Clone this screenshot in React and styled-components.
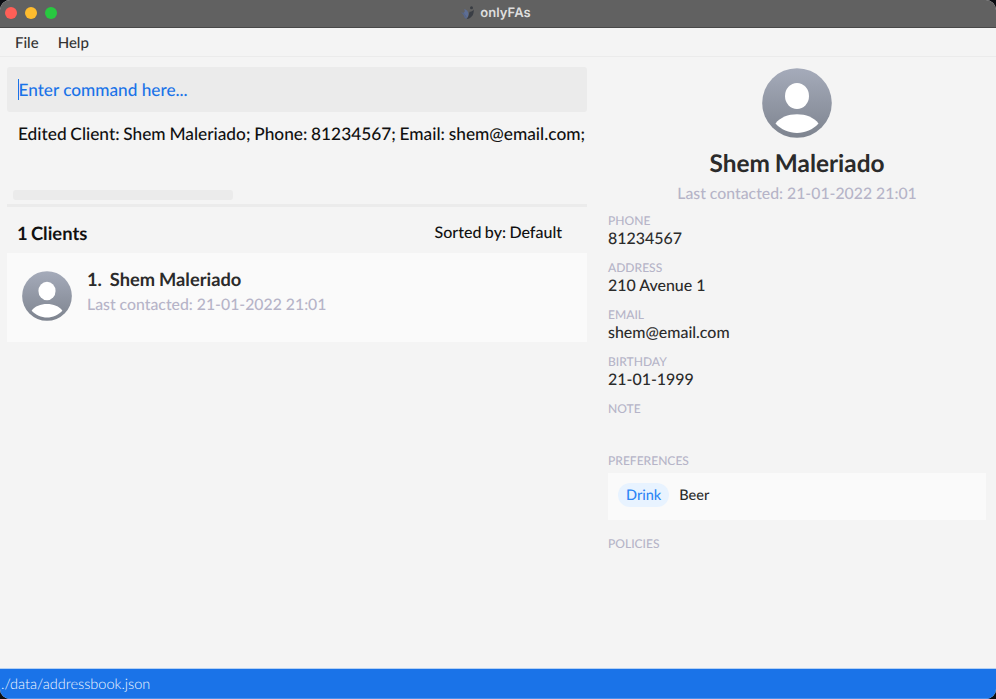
import React from "react";
import styled, { createGlobalStyle } from "styled-components";

const GlobalStyle = createGlobalStyle`
  * { box-sizing: border-box; }
  html, body { margin: 0; background: #0b0d12; overflow: hidden; }
  body { font-family: Lato, "Open Sans", sans-serif; font-size: 17px; color: #2b2b2b; text-rendering: geometricPrecision; }
`;

const Window = styled.div`
  width: 996px;
  height: 699px;
  display: flex;
  flex-direction: column;
  background: #f4f4f4;
  border-radius: 10px;
  overflow: hidden;
`;

const TitleBar = styled.header`
  height: 28px;
  flex: none;
  display: grid;
  grid-template-columns: 1fr auto 1fr;
  align-items: start;
  background: #616161;
  border-bottom: 1px solid #484848;
`;

const Lights = styled.div`
  display: flex;
  gap: 8px;
  padding: 7px 0 0 5px;
`;

const Light = styled.span`
  width: 12px;
  height: 12px;
  border-radius: 50%;
  background: ${(p) => p.$color};
`;

const Title = styled.div`
  display: flex;
  align-items: center;
  gap: 6px;
  margin-left: -4px;
  font: 600 13px/26px Inter, sans-serif;
  letter-spacing: 0.1px;
  color: #dedede;
`;

const MenuBar = styled.nav`
  height: 29px;
  flex: none;
  display: flex;
  gap: 19px;
  padding-left: 15px;
  border-bottom: 1px solid #ebebeb;
  font-size: 15px;
  line-height: 30px;
  font-weight: 500;
  color: #333;
`;

const Main = styled.main`
  flex: 1;
  display: flex;
  gap: 21px;
  padding: 0 10px 0 7px;
`;

const LeftPane = styled.section`
  width: 580px;
  flex: none;
  padding-top: 10px;
`;

const CommandBox = styled.div`
  height: 45px;
  display: flex;
  align-items: center;
  padding-left: 11px;
  border-radius: 3px;
  background: #ebebeb;
`;

const Prompt = styled.span`
  height: 21px;
  border-left: 1px solid #1a73e8;
  font-size: 17.2px;
  line-height: 21px;
  font-weight: 500;
  text-indent: -0.5px;
  color: #1a73e8;
`;

const ResultBox = styled.div`
  height: 95px;
  display: flex;
  flex-direction: column;
  justify-content: space-between;
  padding: 11px 0 7px;
  border-bottom: 3px solid #ebebeb;
  overflow: hidden;
`;

const ResultText = styled.div`
  padding-left: 11px;
  font-size: 17.3px;
  word-spacing: -0.6px;
  line-height: 21px;
  font-weight: 500;
  color: #111;
  white-space: nowrap;
`;

const ScrollThumb = styled.div`
  width: 220px;
  height: 10px;
  margin-left: 6px;
  margin-bottom: -3px;
  border-radius: 3px;
  background: #ebebeb;
`;

const ListHeader = styled.div`
  height: 46px;
  display: flex;
  justify-content: space-between;
  padding: 0 25px 0 10px;
  color: #111;
`;

const Count = styled.h2`
  margin: 0;
  font-size: 18.4px;
  word-spacing: -1.2px;
  line-height: 53px;
  font-weight: 700;
`;

const SortLabel = styled.span`
  font-size: 16px;
  word-spacing: -0.6px;
  line-height: 52px;
  font-weight: 500;
`;

const ClientCard = styled.article`
  height: 89px;
  display: flex;
  gap: 15px;
  padding: 18px 15px;
  background: #fafafa;
`;

const ClientName = styled.h3`
  margin: -4px 0 1px;
  font-size: 18.3px;
  word-spacing: -0.5px;
  line-height: 24px;
  font-weight: 700;
  white-space: pre;
`;

const Contacted = styled.div`
  font-size: 15.8px;
  line-height: 25px;
  font-weight: 500;
  color: #b6b4c8;
  white-space: nowrap;
`;

const Detail = styled.aside`
  flex: 1;
  padding-top: 11px;
`;

const Profile = styled.div`
  display: flex;
  flex-direction: column;
  align-items: center;
`;

const ProfileName = styled.h1`
  margin: 10px 0 1px;
  font-size: 24.4px;
  word-spacing: -1px;
  line-height: 32px;
  font-weight: 700;
`;

const Fields = styled.dl`
  margin: 6px 0 0;
`;

const Field = styled.div`
  height: ${(p) => p.$height || 47}px;
`;

const FieldLabel = styled.dt`
  font-size: 12.05px;
  line-height: 18px;
  font-weight: 500;
  color: #b6b4c8;
`;

const FieldValue = styled.dd`
  margin: 0;
  font-size: 15.95px;
  line-height: 17px;
  font-weight: 500;
`;

const Preference = styled.dd`
  height: 47px;
  display: flex;
  align-items: flex-start;
  gap: 10px;
  padding: 10px;
  margin: 3px 0 0;
  background: #fafafa;
  font-size: 14.5px;
  line-height: 25px;
  font-weight: 500;
`;

const Tag = styled.span`
  height: 24px;
  padding: 0 8px;
  border-radius: 12px;
  background: #e8f3ff;
  color: #2d86f5;
`;

const StatusBar = styled.footer`
  height: 31px;
  flex: none;
  padding-left: 1px;
  border-top: 1px solid #b4d0f3;
  border-bottom: 1px solid #4a90ec;
  background: #1a73e8;
  font-size: 14.5px;
  font-weight: 300;
  line-height: 31px;
  color: #f0f6fe;
`;

const Avatar = ({ size, id }) => (
  <svg width={size} height={size} viewBox="0 0 70 70">
    <defs>
      <linearGradient id={id} x1="0" y1="0" x2="0" y2="1">
        <stop offset="0" stopColor="#a5abba" />
        <stop offset="1" stopColor="#7e848f" />
      </linearGradient>
    </defs>
    <circle cx="35" cy="35" r="34.8" fill={`url(#${id})`} />
    <ellipse cx="35" cy="28" rx="12" ry="13" fill="#fff" />
    <path d="M13.5 55.5C18 49.5 26 46.3 35 46.3S52 49.5 56.5 55.5C51 61.5 43 65 35 65S19 61.5 13.5 55.5Z" fill="#fff" />
  </svg>
);

const AppIcon = () => (
  <svg width="13" height="14" viewBox="0 0 13 14">
    <circle cx="10.5" cy="1.700" r="1.500" fill="#393d43" />
    <path d="M0 6.300C2.200 6.600 4.200 8 4.800 10.200L6 13C3.200 12.500 3.300 10.300 2.300 8.800C1.700 7.800 1 7 0 6.300Z" fill="#56678f" />
    <path d="M3 3C5.800 3.600 7.600 5.500 7.400 8.500C7.200 10.500 6.500 11.800 5.700 12.500C5.600 9.500 3.200 8 2.400 6.800C4 6.500 4.200 4.500 3 3Z" fill="#5d6e95" />
    <path d="M12.700 3.600C13.200 8.500 10.700 12.700 5.500 13C8 10.800 7.800 8 8.600 5.700C10.200 6.200 11.700 5.200 12.700 3.600Z" fill="#3a3e45" />
  </svg>
);

const fields = [
  ["PHONE", "81234567"],
  ["ADDRESS", "210 Avenue 1"],
  ["EMAIL", "shem@email.com"],
  ["BIRTHDAY", "21-01-1999"],
  ["NOTE", "", 52],
];

export default function App() {
  return (
    <>
      <GlobalStyle />
      <Window>
        <TitleBar>
          <Lights>
            <Light $color="#ff5f57" />
            <Light $color="#febc2e" />
            <Light $color="#28c840" />
          </Lights>
          <Title><AppIcon /><span>onlyFAs</span></Title>
        </TitleBar>
        <MenuBar><span>File</span><span>Help</span></MenuBar>
        <Main>
          <LeftPane>
            <CommandBox><Prompt>Enter command here...</Prompt></CommandBox>
            <ResultBox>
              <ResultText>Edited Client: Shem Maleriado; Phone: 81234567; Email: shem@email.com;</ResultText>
              <ScrollThumb />
            </ResultBox>
            <ListHeader>
              <Count>1 Clients</Count>
              <SortLabel>Sorted by: Default</SortLabel>
            </ListHeader>
            <ClientCard>
              <Avatar size={50} id="list-avatar" />
              <div>
                <ClientName>{"1.  Shem Maleriado"}</ClientName>
                <Contacted>Last contacted: 21-01-2022 21:01</Contacted>
              </div>
            </ClientCard>
          </LeftPane>
          <Detail>
            <Profile>
              <Avatar size={70} id="profile-avatar" />
              <ProfileName>Shem Maleriado</ProfileName>
              <Contacted>Last contacted: 21-01-2022 21:01</Contacted>
            </Profile>
            <Fields>
              {fields.map(([label, value, height]) => (
                <Field key={label} $height={height}>
                  <FieldLabel>{label}</FieldLabel>
                  <FieldValue>{value}</FieldValue>
                </Field>
              ))}
              <Field $height={83}>
                <FieldLabel>PREFERENCES</FieldLabel>
                <Preference><Tag>Drink</Tag><span>Beer</span></Preference>
              </Field>
              <Field><FieldLabel>POLICIES</FieldLabel></Field>
            </Fields>
          </Detail>
        </Main>
        <StatusBar>./data/addressbook.json</StatusBar>
      </Window>
    </>
  );
}
